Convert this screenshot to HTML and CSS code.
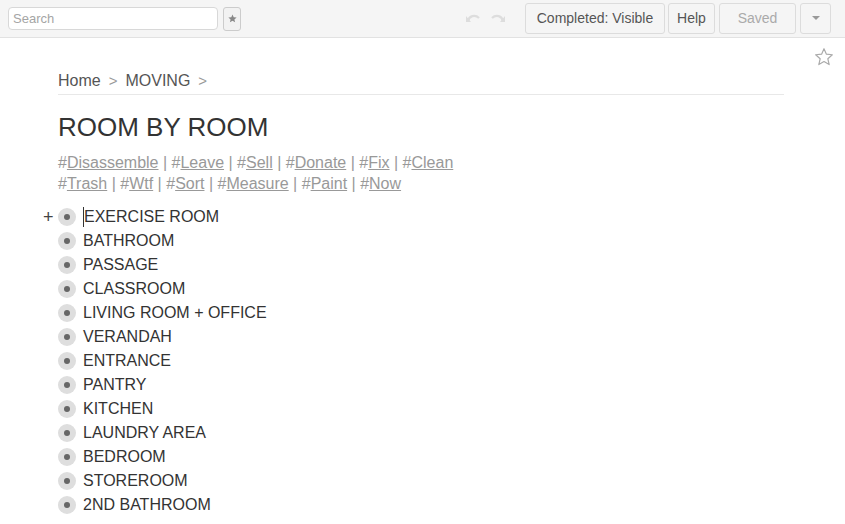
FILE: index.html
```html
<!DOCTYPE html>
<html>
<head>
<meta charset="utf-8">
<link rel="stylesheet" href="styles.css">
</head>
<body>
<div class="toolbar">
  <input class="search" type="text" placeholder="Search">
  <button class="starbtn"><svg width="9" height="9" viewBox="0 0 24 24"><path d="M12 1.5l3.2 7.1 7.8.7-5.9 5.2 1.8 7.6L12 18.1 5.1 22.1l1.8-7.6L1 9.3l7.8-.7z" fill="#888"/></svg></button>
  <div class="spacer"></div>
  <div class="undo">
    <svg width="16" height="10" viewBox="0 0 16 10"><path d="M3 8 C4 3, 10 1, 14 5" stroke="#ddd" stroke-width="2.2" fill="none"/><path d="M1 3 L1 9 L6 9 Z" fill="#ddd"/></svg>
    <svg width="16" height="10" viewBox="0 0 16 10"><path d="M13 8 C12 3, 6 1, 2 5" stroke="#ddd" stroke-width="2.2" fill="none"/><path d="M15 3 L15 9 L10 9 Z" fill="#ddd"/></svg>
  </div>
  <button class="btn completed">Completed: Visible</button>
  <button class="btn help">Help</button>
  <button class="btn saved">Saved</button>
  <button class="btn drop"><span class="caret"></span></button>
</div>
<div class="page">
  <svg class="bigstar" width="20" height="20" viewBox="0 0 24 24"><path d="M12 2l2.9 6.6 7.1.7-5.4 4.8 1.6 7L12 17.4 5.8 21.1l1.6-7L2 9.3l7.1-.7z" fill="none" stroke="#aaa" stroke-width="1.4" stroke-linejoin="round"/></svg>
  <div class="content">
    <div class="crumbs"><span>Home</span><span class="sep">&gt;</span><span>MOVING</span><span class="sep">&gt;</span></div>
    <h1 class="title">ROOM BY ROOM</h1>
    <div class="tags">
      <div>#<u>Disassemble</u> | #<u>Leave</u> | #<u>Sell</u> | #<u>Donate</u> | #<u>Fix</u> | #<u>Clean</u></div>
      <div>#<u>Trash</u> | #<u>Wtf</u> | #<u>Sort</u> | #<u>Measure</u> | #<u>Paint</u> | #<u>Now</u></div>
    </div>
    <ul class="list">
      <li><span class="plus">+</span><span class="bullet"></span><span class="name first">EXERCISE ROOM</span></li>
      <li><span class="bullet"></span><span class="name">BATHROOM</span></li>
      <li><span class="bullet"></span><span class="name">PASSAGE</span></li>
      <li><span class="bullet"></span><span class="name">CLASSROOM</span></li>
      <li><span class="bullet"></span><span class="name">LIVING ROOM + OFFICE</span></li>
      <li><span class="bullet"></span><span class="name">VERANDAH</span></li>
      <li><span class="bullet"></span><span class="name">ENTRANCE</span></li>
      <li><span class="bullet"></span><span class="name">PANTRY</span></li>
      <li><span class="bullet"></span><span class="name">KITCHEN</span></li>
      <li><span class="bullet"></span><span class="name">LAUNDRY AREA</span></li>
      <li><span class="bullet"></span><span class="name">BEDROOM</span></li>
      <li><span class="bullet"></span><span class="name">STOREROOM</span></li>
      <li><span class="bullet"></span><span class="name">2ND BATHROOM</span></li>
    </ul>
  </div>
</div>
</body>
</html>
```
FILE: styles.css
```css
* { box-sizing: border-box; }
html, body { margin: 0; padding: 0; height: 100%; overflow: hidden; }
body { font-family: "Liberation Sans", Arial, sans-serif; color: #333; background: #fff; }

.toolbar {
  height: 38px;
  background: #f5f5f5;
  border-bottom: 1px solid #e2e2e2;
  display: flex;
  align-items: center;
  padding: 0 14px 0 8px;
}
.search {
  width: 210px;
  height: 23px;
  border: 1px solid #d8d8d8;
  border-radius: 4px;
  background: #fff;
  font: 13px "Liberation Sans", Arial, sans-serif;
  padding: 0 4px;
  color: #333;
  margin-top: -1px;
}
.search::placeholder { color: #a5a5a5; }
.starbtn {
  width: 18px;
  height: 24px;
  margin-left: 5px;
  border: 1px solid #ccc;
  border-radius: 3px;
  background: #f2f2f2;
  padding: 0;
  display: flex;
  align-items: center;
  justify-content: center;
}
.spacer { flex: 1; }
.undo { display: flex; gap: 9px; margin-right: 19px; margin-top: -1px; }
.btn {
  height: 31px;
  border: 1px solid #dcdcdc;
  border-radius: 3px;
  background: #f5f5f5;
  font: 14px "Liberation Sans", Arial, sans-serif;
  color: #555;
  padding: 0;
  margin-left: 4px;
  margin-top: -1px;
  white-space: nowrap;
}
.undo + .btn { margin-left: 0; }
.completed { width: 140px; }
.help { width: 47px; margin-left: 3px; }
.saved { width: 77px; color: #aaa; }
.drop { width: 31px; display: flex; align-items: center; justify-content: center; }
.caret {
  width: 0; height: 0;
  border-left: 4px solid transparent;
  border-right: 4px solid transparent;
  border-top: 4px solid #999;
}

.page { position: relative; }
.bigstar { position: absolute; right: 11px; top: 9px; }
.content { padding: 33px 0 0 58px; width: 784px; }
.crumbs {
  display: flex;
  gap: 8px;
  font-size: 16px;
  color: #555;
  padding-bottom: 3px;
  border-bottom: 1px solid #e8e8e8;
  line-height: 20px;
}
.crumbs .sep { color: #999; font-size: 15px; }
.title {
  font-size: 26px;
  font-weight: normal;
  margin: 17px 0 0;
  line-height: 30px;
  color: #333;
}
.tags {
  margin-top: 10px;
  font-size: 16px;
  line-height: 21px;
  color: #999;
}
.tags u { text-decoration-color: #999; }
.list { list-style: none; margin: 11px 0 0 -18px; padding: 0; }
.list li {
  display: flex;
  align-items: center;
  height: 24px;
  position: relative;
  padding-left: 18px;
}
.plus {
  position: absolute;
  left: 3px;
  top: 2px;
  font-size: 18px;
  color: #444;
  line-height: 20px;
}
.bullet {
  width: 18px;
  height: 18px;
  border-radius: 50%;
  background: #dedede;
  position: relative;
  flex: none;
}
.bullet::after {
  content: "";
  position: absolute;
  left: 6px; top: 6px;
  width: 6px; height: 6px;
  border-radius: 50%;
  background: #666;
}
.name { margin-left: 7px; font-size: 16px; color: #333; line-height: 20px; }
.first { border-left: 1px solid #333; padding-left: 0; margin-left: 7px; }
```
